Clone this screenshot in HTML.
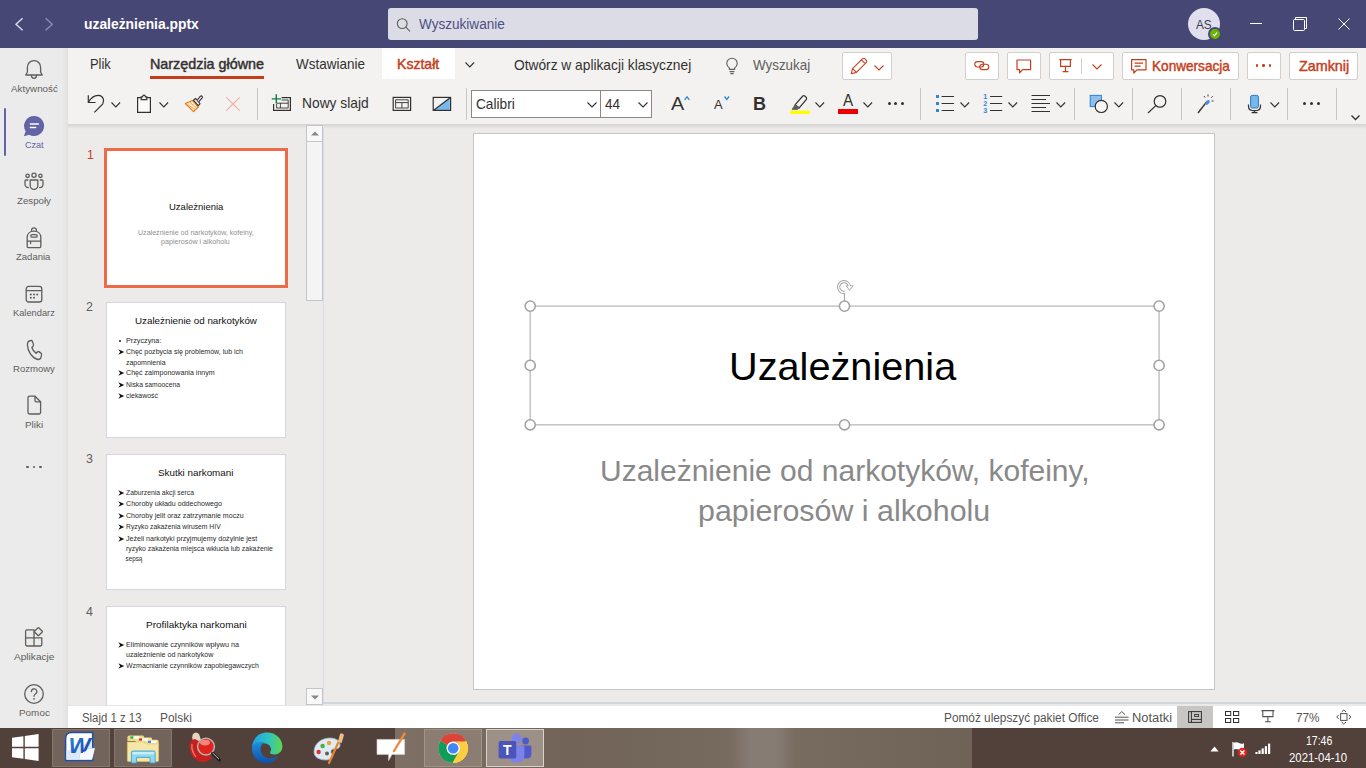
<!DOCTYPE html>
<html lang="pl"><head><meta charset="utf-8"><title>uzależnienia.pptx</title>
<style>
html,body{margin:0;padding:0;}
body{width:1366px;height:768px;overflow:hidden;position:relative;background:#edebe9;font-family:"Liberation Sans",sans-serif;}
#r{position:absolute;left:0;top:0;width:1366px;height:768px;overflow:hidden;}
#r div,#r svg,#r span.t{position:absolute;}
#r span.t{white-space:nowrap;transform-origin:0 50%;display:block;}
svg{overflow:visible;}
</style></head>
<body><div id="r">
<div style="left:68px;top:124px;width:1298px;height:581px;background:#edebe9;"></div>
<div style="left:323px;top:128px;width:1px;height:576px;background:#dcdce4;"></div>
<div style="left:0px;top:0px;width:1366px;height:48px;background:#464775;"></div>
<svg style="left:14px;top:16px;" width="10" height="16" viewBox="0 0 10 16"><path d="M8.6 2.2 L2 8.2 L8.6 14.2" fill="none" stroke="#dcdcec" stroke-width="1.4"/></svg>
<svg style="left:44px;top:16px;" width="10" height="16" viewBox="0 0 10 16"><path d="M1.6 2.2 L8.2 8.2 L1.6 14.2" fill="none" stroke="#8d8eb3" stroke-width="1.4"/></svg>
<span class="t" id="l0" style="left:84.00px;top:17.00px;font-size:14px;line-height:14px;height:14px;color:#ffffff;font-weight:700;transform:scaleX(0.9903);">uzależnienia.pptx</span>
<div style="left:388px;top:8px;width:590px;height:32px;background:#dcdce6;border-radius:3px;"></div>
<svg style="left:396.4px;top:16.6px;" width="16" height="16" viewBox="0 0 16 16"><circle cx="6.2" cy="6.6" r="4.9" fill="none" stroke="#5f5d5c" stroke-width="1.1"/><path d="M9.8 10.2 L14 14.4" stroke="#5f5d5c" stroke-width="1.1" fill="none"/></svg>
<span class="t" id="l1" style="left:418.50px;top:17.20px;font-size:14px;line-height:14px;height:14px;color:#4d4f85;transform:scaleX(0.9687);">Wyszukiwanie</span>
<div style="left:1188px;top:8px;width:32px;height:32px;background:#e1dfee;border-radius:50%;"></div>
<span class="t" id="l2" style="left:1196.00px;top:17.50px;font-size:13px;line-height:13px;height:13px;color:#3b3a50;transform:scaleX(0.9054);">AS</span>
<div style="left:1208px;top:27px;width:14px;height:14px;background:#464775;border-radius:50%;"></div>
<div style="left:1210px;top:29px;width:10px;height:10px;background:#6bb700;border-radius:50%;"></div>
<svg style="left:1212px;top:31px;" width="6" height="6" viewBox="0 0 6 6"><path d="M1 3.2 L2.5 4.6 L5 1.6" fill="none" stroke="#fff" stroke-width="1.1"/></svg>
<div style="left:1250px;top:22.5px;width:12px;height:1px;background:#ffffff;"></div>
<svg style="left:1292px;top:16px;" width="16" height="16" viewBox="0 0 16 16"><path d="M3.5 3.5 V1.5 H14.5 V12.5 H12.5" fill="none" stroke="#fff" stroke-width="1"/><rect x="1.5" y="3.5" width="11" height="11" rx="1" fill="none" stroke="#fff" stroke-width="1"/></svg>
<svg style="left:1338px;top:18px;" width="12" height="12" viewBox="0 0 12 12"><path d="M0.5 0.5 L11.5 11.5 M11.5 0.5 L0.5 11.5" stroke="#fff" stroke-width="1" fill="none"/></svg>
<div style="left:0px;top:48px;width:68px;height:680px;background:#ebebeb;"></div>
<div style="left:62px;top:48px;width:6px;height:680px;background:linear-gradient(90deg,rgba(0,0,0,0),rgba(0,0,0,0.045));"></div>
<div style="left:4px;top:108px;width:2px;height:48px;background:#6264a7;border-radius:1px;"></div>
<span class="t" id="l3" style="left:11.00px;top:83.95px;font-size:9.7px;line-height:9.7px;height:9.7px;color:#5f5e5c;transform:scaleX(1.0117);">Aktywność</span>
<span class="t" id="l4" style="left:17.00px;top:195.95px;font-size:9.7px;line-height:9.7px;height:9.7px;color:#5f5e5c;">Zespoły</span>
<span class="t" id="l5" style="left:16.00px;top:251.95px;font-size:9.7px;line-height:9.7px;height:9.7px;color:#5f5e5c;transform:scaleX(0.9826);">Zadania</span>
<span class="t" id="l6" style="left:13.00px;top:307.95px;font-size:9.7px;line-height:9.7px;height:9.7px;color:#5f5e5c;transform:scaleX(0.9594);">Kalendarz</span>
<span class="t" id="l7" style="left:13.00px;top:363.95px;font-size:9.7px;line-height:9.7px;height:9.7px;color:#5f5e5c;transform:scaleX(0.9840);">Rozmowy</span>
<span class="t" id="l8" style="left:25.00px;top:419.95px;font-size:9.7px;line-height:9.7px;height:9.7px;color:#5f5e5c;transform:scaleX(1.0222);">Pliki</span>
<span class="t" id="l9" style="left:14.00px;top:651.95px;font-size:9.7px;line-height:9.7px;height:9.7px;color:#5f5e5c;transform:scaleX(1.0422);">Aplikacje</span>
<span class="t" id="l10" style="left:19.00px;top:707.95px;font-size:9.7px;line-height:9.7px;height:9.7px;color:#5f5e5c;transform:scaleX(1.0229);">Pomoc</span>
<span class="t" id="l11" style="left:24.80px;top:140.00px;font-size:9.6px;line-height:9.6px;height:9.6px;color:#6264a7;transform:scaleX(0.9421);">Czat</span>
<svg style="left:24px;top:59px;" width="20" height="21" viewBox="0 0 20 21"><path d="M1.8 16 H18.2 L16.6 13 V8.4 C16.6 4.4 13.8 1.6 10 1.6 C6.2 1.6 3.4 4.4 3.4 8.4 V13 Z" fill="none" stroke="#5f5e5c" stroke-width="1.3" stroke-linecap="round" stroke-linejoin="round"/><path d="M7.4 16.4 C7.6 18.6 8.8 19.4 10 19.4 C11.2 19.4 12.4 18.6 12.6 16.4" fill="none" stroke="#5f5e5c" stroke-width="1.3" stroke-linecap="round" stroke-linejoin="round"/></svg>
<svg style="left:23px;top:115px;" width="22" height="22" viewBox="0 0 22 22"><path d="M11.2 1 A10 10 0 1 1 6.2 19.7 L0.9 21.2 L2.6 16.2 A10 10 0 0 1 11.2 1 Z" fill="#6264a7"/><path d="M7.4 9 H15.4 M7.4 12.6 H12.6" stroke="#fff" stroke-width="1.5" stroke-linecap="round" fill="none"/></svg>
<svg style="left:23px;top:171px;" width="22" height="22" viewBox="0 0 22 22"><circle cx="11" cy="4.2" r="2.1" fill="none" stroke="#5f5e5c" stroke-width="1.3" stroke-linecap="round" stroke-linejoin="round"/><circle cx="4.6" cy="4.8" r="1.7" fill="none" stroke="#5f5e5c" stroke-width="1.3" stroke-linecap="round" stroke-linejoin="round"/><circle cx="17.4" cy="4.8" r="1.7" fill="none" stroke="#5f5e5c" stroke-width="1.3" stroke-linecap="round" stroke-linejoin="round"/><path d="M7.2 9 H14.8 V14.6 A3.8 3.8 0 0 1 7.2 14.6 Z" fill="none" stroke="#5f5e5c" stroke-width="1.3" stroke-linecap="round" stroke-linejoin="round"/><path d="M4.8 9 H3 Q2 9 2 10 V13.2 A3.4 3.4 0 0 0 5.4 16.6" fill="none" stroke="#5f5e5c" stroke-width="1.3" stroke-linecap="round" stroke-linejoin="round"/><path d="M17.2 9 H19 Q20 9 20 10 V13.2 A3.4 3.4 0 0 1 16.6 16.6" fill="none" stroke="#5f5e5c" stroke-width="1.3" stroke-linecap="round" stroke-linejoin="round"/></svg>
<svg style="left:24px;top:227px;" width="20" height="22" viewBox="0 0 20 22"><path d="M7.6 4.2 V3.2 A2.4 2.4 0 0 1 12.4 3.2 V4.2" fill="none" stroke="#5f5e5c" stroke-width="1.3" stroke-linecap="round" stroke-linejoin="round"/><path d="M3.2 19.6 V10.4 C3.2 6.6 6 4.2 10 4.2 C14 4.2 16.8 6.6 16.8 10.4 V19.6 Q16.8 20.6 15.8 20.6 H4.2 Q3.2 20.6 3.2 19.6 Z" fill="none" stroke="#5f5e5c" stroke-width="1.3" stroke-linecap="round" stroke-linejoin="round"/><rect x="6.8" y="7.6" width="6.4" height="2.6" rx="1.3" fill="none" stroke="#5f5e5c" stroke-width="1.3" stroke-linecap="round" stroke-linejoin="round"/><path d="M3.4 14.2 H16.6 M6.6 14.4 V16.6" fill="none" stroke="#5f5e5c" stroke-width="1.3" stroke-linecap="round" stroke-linejoin="round"/></svg>
<svg style="left:24px;top:283.5px;" width="20" height="20" viewBox="0 0 20 20"><rect x="2.2" y="2.4" width="15.6" height="15.6" rx="2.6" fill="none" stroke="#5f5e5c" stroke-width="1.3" stroke-linecap="round" stroke-linejoin="round"/><path d="M2.4 6.6 H17.6" fill="none" stroke="#5f5e5c" stroke-width="1.3" stroke-linecap="round" stroke-linejoin="round"/><circle cx="6.8" cy="10.4" r="1" fill="#5f5e5c"/><circle cx="10" cy="10.4" r="1" fill="#5f5e5c"/><circle cx="13.2" cy="10.4" r="1" fill="#5f5e5c"/><circle cx="6.8" cy="13.8" r="1" fill="#5f5e5c"/><circle cx="10" cy="13.8" r="1" fill="#5f5e5c"/></svg>
<svg style="left:24px;top:339px;" width="20" height="24" viewBox="0 0 20 24"><g transform="translate(0.3,-0.6) scale(0.97,1.2)"><path d="M5.2 2.2 L7 1.8 Q8 1.7 8.4 2.6 L9.4 5 Q9.7 5.8 9.1 6.4 L7.8 7.6 Q8.8 10.6 12.2 12.4 L13.6 11.2 Q14.3 10.7 15.1 11.1 L17.2 12.3 Q18 12.8 17.8 13.7 L17.3 15.4 Q16.6 17.8 14 17.6 C8.4 16.6 3.4 11 3.2 5.4 Q3.2 2.8 5.2 2.2 Z" fill="none" stroke="#5f5e5c" stroke-width="1.3" stroke-linecap="round" stroke-linejoin="round"/></g></svg>
<svg style="left:24px;top:394px;" width="20" height="22" viewBox="0 0 20 22"><path d="M4 3.6 Q4 2.2 5.4 2.2 H11 L16.6 7.8 V18.6 Q16.6 20 15.2 20 H5.4 Q4 20 4 18.6 Z" fill="none" stroke="#5f5e5c" stroke-width="1.3" stroke-linecap="round" stroke-linejoin="round"/><path d="M11 2.4 V6.4 Q11 7.8 12.4 7.8 H16.4" fill="none" stroke="#5f5e5c" stroke-width="1.3" stroke-linecap="round" stroke-linejoin="round"/></svg>
<div style="left:26.3px;top:466px;width:2.4px;height:2.4px;background:#5f5e5c;border-radius:50%;"></div>
<div style="left:32.8px;top:466px;width:2.4px;height:2.4px;background:#5f5e5c;border-radius:50%;"></div>
<div style="left:39.3px;top:466px;width:2.4px;height:2.4px;background:#5f5e5c;border-radius:50%;"></div>
<svg style="left:24px;top:627px;" width="20" height="20" viewBox="0 0 20 20"><path d="M10 2.8 H3 Q1.6 2.8 1.6 4.2 V17.6 Q1.6 19 3 19 H16.4 Q17.8 19 17.8 17.6 V10.8 H1.6 M10 2.8 V19" fill="none" stroke="#5f5e5c" stroke-width="1.3" stroke-linecap="round" stroke-linejoin="round"/><rect x="11.4" y="1.6" width="6" height="6" rx="0.8" transform="rotate(45 14.4 4.6)" fill="none" stroke="#5f5e5c" stroke-width="1.3" stroke-linecap="round" stroke-linejoin="round"/></svg>
<svg style="left:23px;top:683px;" width="22" height="22" viewBox="0 0 22 22"><circle cx="11" cy="11" r="9.3" fill="none" stroke="#5f5e5c" stroke-width="1.3" stroke-linecap="round" stroke-linejoin="round"/><path d="M8.4 8.6 A2.7 2.7 0 1 1 12.4 11 Q11 11.8 11 13.2" fill="none" stroke="#5f5e5c" stroke-width="1.3" stroke-linecap="round" stroke-linejoin="round"/><circle cx="11" cy="15.8" r="0.9" fill="#5f5e5c"/></svg>
<div style="left:68px;top:124px;width:1298px;height:5px;background:linear-gradient(180deg,rgba(0,0,0,0.10),rgba(0,0,0,0));"></div>
<div style="left:68px;top:48px;width:1298px;height:76px;background:#f3f2f1;"></div>
<span class="t" id="l12" style="left:89.80px;top:57.35px;font-size:14.3px;line-height:14.3px;height:14.3px;color:#323130;transform:scaleX(0.9044);">Plik</span>
<span class="t" id="l13" style="left:150.01px;top:57.25px;font-size:14.5px;line-height:14.5px;height:14.5px;color:#323130;transform:scaleX(0.9896);-webkit-text-stroke:0.45px currentColor;">Narzędzia główne</span>
<div style="left:150px;top:75.5px;width:114px;height:3px;background:#c43e1c;"></div>
<span class="t" id="l14" style="left:296.00px;top:57.35px;font-size:14.3px;line-height:14.3px;height:14.3px;color:#323130;transform:scaleX(0.9433);">Wstawianie</span>
<div style="left:382px;top:48px;width:73px;height:31px;background:#ffffff;"></div>
<span class="t" id="l15" style="left:397.03px;top:57.25px;font-size:14.5px;line-height:14.5px;height:14.5px;color:#c43e1c;transform:scaleX(0.9697);-webkit-text-stroke:0.45px currentColor;">Kształt</span>
<svg style="left:464.7px;top:61.8px;" width="9.6" height="5.4" viewBox="0 0 9.6 5.4"><path d="M0.5 0.5 L4.8 4.9 L9.1 0.5" fill="none" stroke="#323130" stroke-width="1.1"/></svg>
<span class="t" id="l16" style="left:514.00px;top:58.35px;font-size:14.5px;line-height:14.5px;height:14.5px;color:#323130;transform:scaleX(0.9479);">Otwórz w aplikacji klasycznej</span>
<svg style="left:724px;top:56px;" width="16" height="20" viewBox="0 0 16 20"><path d="M5.4 13.4 V12 C3.6 10.8 2.8 9.2 2.8 7.4 A5.2 5.2 0 0 1 13.2 7.4 C13.2 9.2 12.4 10.8 10.6 12 V13.4 Z" fill="none" stroke="#605e5c" stroke-width="1.1"/><path d="M5.6 15.6 H10.4 M6.4 17.6 H9.6" stroke="#605e5c" stroke-width="1.1" fill="none"/></svg>
<span class="t" id="l17" style="left:753.00px;top:58.35px;font-size:14.5px;line-height:14.5px;height:14.5px;color:#605e5c;transform:scaleX(0.9240);">Wyszukaj</span>
<div style="left:842px;top:52px;width:49.5px;height:28px;background:#ffffff;box-sizing:border-box;border:1px solid #d2d0ce;border-radius:2px;"></div>
<svg style="left:849px;top:56px;" width="20" height="20" viewBox="0 0 20 20"><path d="M2.2 17.8 L3.6 12.6 L13.6 2.6 Q14.6 1.8 15.6 2.6 L17.4 4.4 Q18.2 5.4 17.4 6.4 L7.4 16.4 Z M3.8 12.8 L7.2 16.2 M12.4 3.8 L16.2 7.6" fill="none" stroke="#c43e1c" stroke-width="1.1" stroke-linejoin="round"/></svg>
<svg style="left:873.5px;top:64.75px;" width="10" height="5.5" viewBox="0 0 10 5.5"><path d="M0.5 0.5 L5.0 5.0 L9.5 0.5" fill="none" stroke="#c43e1c" stroke-width="1.1"/></svg>
<div style="left:965px;top:52px;width:33.5px;height:28px;background:#ffffff;box-sizing:border-box;border:1px solid #d2d0ce;border-radius:2px;"></div>
<svg style="left:973px;top:58px;" width="18" height="16" viewBox="0 0 18 16"><rect x="1.8" y="3.6" width="9" height="5.4" rx="2.7" fill="none" stroke="#c43e1c" stroke-width="1.1"/><rect x="6.8" y="6.2" width="9" height="5.4" rx="2.7" fill="none" stroke="#c43e1c" stroke-width="1.1"/></svg>
<div style="left:1007px;top:52px;width:33.5px;height:28px;background:#ffffff;box-sizing:border-box;border:1px solid #d2d0ce;border-radius:2px;"></div>
<svg style="left:1015px;top:58px;" width="18" height="18" viewBox="0 0 18 18"><path d="M2 2 H15.6 V11.6 H7.6 L4.6 14.8 V11.6 H2 Z" fill="none" stroke="#c43e1c" stroke-width="1.2" stroke-linejoin="round"/></svg>
<div style="left:1049px;top:52px;width:64.5px;height:28px;background:#ffffff;box-sizing:border-box;border:1px solid #d2d0ce;border-radius:2px;"></div>
<svg style="left:1057px;top:57px;" width="18" height="18" viewBox="0 0 18 18"><path d="M2.4 2.6 H14.6 M3.6 2.8 V9.4 H13.4 V2.8 M8.5 9.6 V14.4 M5.6 14.6 H11.4" fill="none" stroke="#c43e1c" stroke-width="1.2"/></svg>
<div style="left:1081px;top:58px;width:1px;height:16px;background:#d2d0ce;"></div>
<svg style="left:1092.0px;top:63.75px;" width="10" height="5.5" viewBox="0 0 10 5.5"><path d="M0.5 0.5 L5.0 5.0 L9.5 0.5" fill="none" stroke="#c43e1c" stroke-width="1.1"/></svg>
<div style="left:1122px;top:52px;width:116.5px;height:28px;background:#ffffff;box-sizing:border-box;border:1px solid #d2d0ce;border-radius:2px;"></div>
<svg style="left:1130px;top:58px;" width="18" height="18" viewBox="0 0 18 18"><path d="M1.6 1.6 H16 V11.8 H7 L3.8 15 V11.8 H1.6 Z M4.6 5.2 H13 M4.6 8.2 H10.6" fill="none" stroke="#c43e1c" stroke-width="1.2" stroke-linejoin="round"/></svg>
<span class="t" id="l18" style="left:1151.56px;top:58.75px;font-size:14.5px;line-height:14.5px;height:14.5px;color:#c43e1c;transform:scaleX(0.9379);-webkit-text-stroke:0.45px currentColor;">Konwersacja</span>
<div style="left:1247px;top:52px;width:33.5px;height:28px;background:#ffffff;box-sizing:border-box;border:1px solid #d2d0ce;border-radius:2px;"></div>
<div style="left:1255.7px;top:64.3px;width:2.6px;height:2.6px;background:#c43e1c;border-radius:50%;"></div>
<div style="left:1262.2px;top:64.3px;width:2.6px;height:2.6px;background:#c43e1c;border-radius:50%;"></div>
<div style="left:1268.7px;top:64.3px;width:2.6px;height:2.6px;background:#c43e1c;border-radius:50%;"></div>
<div style="left:1289px;top:52px;width:68.5px;height:28px;background:#ffffff;box-sizing:border-box;border:1px solid #d2d0ce;border-radius:2px;"></div>
<span class="t" id="l19" style="left:1298.80px;top:58.75px;font-size:14.5px;line-height:14.5px;height:14.5px;color:#c43e1c;transform:scaleX(0.9894);-webkit-text-stroke:0.45px currentColor;">Zamknij</span>
<svg style="left:86px;top:93px;" width="20" height="20" viewBox="0 0 20 20"><path d="M2.3 2.2 V9.5 H9.6" fill="none" stroke="#323130" stroke-width="1.2"/><path d="M2.5 9.3 C5 4.6 9 2.3 12.6 2.4 C17 2.8 19 7.6 16.6 11.2 L8.4 19.4" fill="none" stroke="#323130" stroke-width="1.2"/></svg>
<svg style="left:110.7px;top:101.8px;" width="9.6" height="5.4" viewBox="0 0 9.6 5.4"><path d="M0.5 0.5 L4.8 4.9 L9.1 0.5" fill="none" stroke="#323130" stroke-width="1.1"/></svg>
<svg style="left:135px;top:94px;" width="18" height="20" viewBox="0 0 18 20"><path d="M6.2 3.6 H2.6 V18.4 H15.4 V3.6 H11.8" fill="#fafafa" stroke="#323130" stroke-width="1.2"/><path d="M6.2 5.6 V2.8 H7.6 Q7.8 1.2 9 1.2 Q10.2 1.2 10.4 2.8 H11.8 V5.6 Z" fill="none" stroke="#323130" stroke-width="1.2"/></svg>
<svg style="left:158.7px;top:102.3px;" width="9.6" height="5.4" viewBox="0 0 9.6 5.4"><path d="M0.5 0.5 L4.8 4.9 L9.1 0.5" fill="none" stroke="#323130" stroke-width="1.1"/></svg>
<svg style="left:184px;top:94px;" width="20" height="20" viewBox="0 0 20 20"><path d="M1.4 9.6 L8.6 6.6 L14.2 13 L9.6 17.6 Z" fill="#fde9c8" stroke="#e07a10" stroke-width="1.1" stroke-linejoin="round"/><path d="M3 10.4 L11.4 15.6 M6 8.4 L12.8 14.2" stroke="#f0a040" stroke-width="0.9" fill="none"/><path d="M9.4 6.2 L11.6 4.4 L16 9.6 L14.4 11.8 Z" fill="#f3f2f1" stroke="#323130" stroke-width="1.1" stroke-linejoin="round"/><path d="M13.4 6 L16.4 2.2 Q17.4 1.4 18.2 2.4 Q18.8 3.2 18 4.2 L14.8 7.6" fill="#f3f2f1" stroke="#323130" stroke-width="1.1"/></svg>
<svg style="left:226px;top:97px;" width="14" height="14" viewBox="0 0 14 14"><path d="M0.3 0.3 L13.7 13.7 M13.7 0.3 L0.3 13.7" stroke="#f1a9a5" stroke-width="1.1" fill="none"/></svg>
<div style="left:257px;top:88px;width:1px;height:32px;background:#c8c6c4;"></div>
<svg style="left:271px;top:92px;" width="22" height="20" viewBox="0 0 22 20"><path d="M10.6 5.6 H19.4 V18.4 H2.6 V12" fill="none" stroke="#323130" stroke-width="1.2"/><path d="M10.6 8 H17.2 V16 H5.6 V12 M5.6 11.2 H17.2 M9.4 11.2 V16" fill="none" stroke="#323130" stroke-width="0.9"/><path d="M5.3 2.2 V11.4 M0.8 6.9 H10" stroke="#107c41" stroke-width="1.4" fill="none"/></svg>
<span class="t" id="l20" style="left:302.03px;top:96.25px;font-size:14.3px;line-height:14.3px;height:14.3px;color:#323130;transform:scaleX(0.9652);">Nowy slajd</span>
<svg style="left:392px;top:96px;" width="20" height="16" viewBox="0 0 20 16"><rect x="1.2" y="1.4" width="17.4" height="13" fill="none" stroke="#323130" stroke-width="1.2"/><path d="M3.6 3.8 H16.2 V12 H3.6 Z M3.6 6.6 H16.2 M9.9 6.6 V12" fill="none" stroke="#323130" stroke-width="0.9"/></svg>
<svg style="left:432px;top:96px;" width="20" height="16" viewBox="0 0 20 16"><path d="M2 14 L17.8 2 V14 Z" fill="#78b7ea"/><rect x="1.2" y="1.4" width="17.4" height="13" fill="none" stroke="#323130" stroke-width="1.2"/><path d="M2 14 L17.8 2" fill="none" stroke="#323130" stroke-width="1.2"/></svg>
<div style="left:466px;top:88px;width:1px;height:32px;background:#c8c6c4;"></div>
<div style="left:471px;top:90px;width:130px;height:28px;background:#ffffff;box-sizing:border-box;border:1px solid #8a8886;"></div>
<div style="left:600px;top:90px;width:51.5px;height:28px;background:#ffffff;box-sizing:border-box;border:1px solid #8a8886;"></div>
<span class="t" id="l21" style="left:476.00px;top:96.75px;font-size:14.5px;line-height:14.5px;height:14.5px;color:#323130;transform:scaleX(0.9420);">Calibri</span>
<svg style="left:587.0px;top:101.75px;" width="10" height="5.5" viewBox="0 0 10 5.5"><path d="M0.5 0.5 L5.0 5.0 L9.5 0.5" fill="none" stroke="#323130" stroke-width="1.1"/></svg>
<span class="t" id="l22" style="left:604.50px;top:96.75px;font-size:14.5px;line-height:14.5px;height:14.5px;color:#323130;transform:scaleX(0.9338);">44</span>
<svg style="left:638.0px;top:101.75px;" width="10" height="5.5" viewBox="0 0 10 5.5"><path d="M0.5 0.5 L5.0 5.0 L9.5 0.5" fill="none" stroke="#323130" stroke-width="1.1"/></svg>
<span class="t" id="l23" style="left:670.50px;top:94.00px;font-size:19px;line-height:19px;height:19px;color:#323130;transform:scaleX(1.0385);">A</span>
<svg style="left:683.8px;top:96px;" width="6" height="4.4" viewBox="0 0 6 4.4"><path d="M0.6 3.8 L3 0.8 L5.4 3.8" fill="none" stroke="#2b88d8" stroke-width="1.3"/></svg>
<span class="t" id="l24" style="left:714.00px;top:98.00px;font-size:13.6px;line-height:13.6px;height:13.6px;color:#323130;transform:scaleX(0.9500);">A</span>
<svg style="left:724.0px;top:96.4px;" width="5.6" height="4" viewBox="0 0 5.6 4"><path d="M0.5 0.5 L2.8 3.5 L5.1 0.5" fill="none" stroke="#2b88d8" stroke-width="1.3"/></svg>
<span class="t" id="l25" style="left:753.00px;top:94.50px;font-size:18px;line-height:18px;height:18px;color:#323130;font-weight:700;">B</span>
<svg style="left:789px;top:93px;" width="22" height="22" viewBox="0 0 22 22"><path d="M6.2 11.6 L13.8 3 Q14.8 2.2 15.8 3 L17.4 4.6 Q18 5.6 17.2 6.6 L10.2 15 Z" fill="none" stroke="#323130" stroke-width="1.2"/><path d="M6.2 11.6 L10.2 15 L8.6 16.4 H3 Z" fill="#605e5c" stroke="#605e5c" stroke-width="0.8"/><rect x="1" y="17.7" width="20" height="3.3" fill="#ffff00"/></svg>
<svg style="left:814.7px;top:101.8px;" width="9.6" height="5.4" viewBox="0 0 9.6 5.4"><path d="M0.5 0.5 L4.8 4.9 L9.1 0.5" fill="none" stroke="#323130" stroke-width="1.1"/></svg>
<span class="t" id="l26" style="left:842.50px;top:93.00px;font-size:16.6px;line-height:16.6px;height:16.6px;color:#323130;transform:scaleX(0.9167);">A</span>
<div style="left:838px;top:109px;width:20px;height:5px;background:#f00000;"></div>
<svg style="left:862.7px;top:101.8px;" width="9.6" height="5.4" viewBox="0 0 9.6 5.4"><path d="M0.5 0.5 L4.8 4.9 L9.1 0.5" fill="none" stroke="#323130" stroke-width="1.1"/></svg>
<div style="left:887.5px;top:102.2px;width:3px;height:3px;background:#323130;border-radius:50%;"></div>
<div style="left:894.0px;top:102.2px;width:3px;height:3px;background:#323130;border-radius:50%;"></div>
<div style="left:900.5px;top:102.2px;width:3px;height:3px;background:#323130;border-radius:50%;"></div>
<div style="left:920px;top:88px;width:1px;height:32px;background:#c8c6c4;"></div>
<svg style="left:935px;top:93px;" width="20" height="21" viewBox="0 0 20 21"><rect x="1" y="2.0" width="3" height="3" fill="#2b88d8"/><path d="M6.6 3.5 H19" stroke="#323130" stroke-width="1"/><rect x="1" y="9.0" width="3" height="3" fill="#2b88d8"/><path d="M6.6 10.5 H19" stroke="#323130" stroke-width="1"/><rect x="1" y="16.0" width="3" height="3" fill="#2b88d8"/><path d="M6.6 17.5 H19" stroke="#323130" stroke-width="1"/></svg>
<svg style="left:959.7px;top:101.8px;" width="9.6" height="5.4" viewBox="0 0 9.6 5.4"><path d="M0.5 0.5 L4.8 4.9 L9.1 0.5" fill="none" stroke="#323130" stroke-width="1.1"/></svg>
<svg style="left:983px;top:93px;" width="20" height="21" viewBox="0 0 20 21"><text x="0.2" y="6.1" font-size="7.2" font-weight="700" font-family="Liberation Sans, sans-serif" fill="#2b88d8">1</text><path d="M7 3.5 H19.2" stroke="#323130" stroke-width="1"/><text x="0.2" y="13.1" font-size="7.2" font-weight="700" font-family="Liberation Sans, sans-serif" fill="#2b88d8">2</text><path d="M7 10.5 H19.2" stroke="#323130" stroke-width="1"/><text x="0.2" y="20.1" font-size="7.2" font-weight="700" font-family="Liberation Sans, sans-serif" fill="#2b88d8">3</text><path d="M7 17.5 H19.2" stroke="#323130" stroke-width="1"/></svg>
<svg style="left:1007.7px;top:101.8px;" width="9.6" height="5.4" viewBox="0 0 9.6 5.4"><path d="M0.5 0.5 L4.8 4.9 L9.1 0.5" fill="none" stroke="#323130" stroke-width="1.1"/></svg>
<svg style="left:1031px;top:93px;" width="20" height="21" viewBox="0 0 20 21"><path d="M0.5 2.5 H19" stroke="#323130" stroke-width="1"/><path d="M0.5 6.5 H15" stroke="#323130" stroke-width="1"/><path d="M0.5 10.5 H19" stroke="#323130" stroke-width="1"/><path d="M0.5 14.5 H15" stroke="#323130" stroke-width="1"/><path d="M0.5 18.5 H19" stroke="#323130" stroke-width="1"/></svg>
<svg style="left:1055.7px;top:101.8px;" width="9.6" height="5.4" viewBox="0 0 9.6 5.4"><path d="M0.5 0.5 L4.8 4.9 L9.1 0.5" fill="none" stroke="#323130" stroke-width="1.1"/></svg>
<div style="left:1074px;top:88px;width:1px;height:32px;background:#c8c6c4;"></div>
<svg style="left:1088px;top:94px;" width="22" height="22" viewBox="0 0 22 22"><rect x="2.2" y="1.4" width="11.2" height="11.2" fill="#8fc0ec" stroke="#2b82d6" stroke-width="1"/><circle cx="13.3" cy="12.4" r="6.1" fill="#f7f6f5" stroke="#323130" stroke-width="1.2"/></svg>
<svg style="left:1113.7px;top:101.8px;" width="9.6" height="5.4" viewBox="0 0 9.6 5.4"><path d="M0.5 0.5 L4.8 4.9 L9.1 0.5" fill="none" stroke="#323130" stroke-width="1.1"/></svg>
<div style="left:1132px;top:88px;width:1px;height:32px;background:#c8c6c4;"></div>
<svg style="left:1146px;top:94px;" width="22" height="20" viewBox="0 0 22 20"><circle cx="14" cy="7.4" r="5.8" fill="none" stroke="#323130" stroke-width="1.2"/><path d="M9.8 11.6 L2 19" fill="none" stroke="#323130" stroke-width="1.2"/></svg>
<div style="left:1181px;top:88px;width:1px;height:32px;background:#c8c6c4;"></div>
<svg style="left:1195px;top:93px;" width="20" height="22" viewBox="0 0 20 22"><path d="M3 20 L12 8.4" stroke="#323130" stroke-width="1.4" fill="none"/><path d="M10.2 10.6 C11 7.6 13 6.4 14.4 7.4 C15.4 8.6 14.4 10.6 11.6 12.2 Z" fill="#4a90d9"/><path d="M13 1.4 V3.6 M17.8 3.2 L16.2 4.8 M18.6 8 H16.6 M9 3 L10.2 4.6" stroke="#323130" stroke-width="0.9" fill="none"/></svg>
<div style="left:1230px;top:88px;width:1px;height:32px;background:#c8c6c4;"></div>
<svg style="left:1245px;top:93px;" width="18" height="22" viewBox="0 0 18 22"><rect x="5.6" y="2.4" width="7.8" height="12.6" rx="1.6" fill="#78b7ea" stroke="#2b79c2" stroke-width="1"/><path d="M3.5 11.4 V13.4 Q3.5 17.7 9.5 17.7 Q15.5 17.7 15.5 13.4 V11.4 M9.5 17.8 V19.6 M6.6 19.7 H12.4" fill="none" stroke="#323130" stroke-width="1.2"/></svg>
<svg style="left:1269.7px;top:101.89999999999999px;" width="9.6" height="5.4" viewBox="0 0 9.6 5.4"><path d="M0.5 0.5 L4.8 4.9 L9.1 0.5" fill="none" stroke="#323130" stroke-width="1.1"/></svg>
<div style="left:1287px;top:88px;width:1px;height:32px;background:#c8c6c4;"></div>
<div style="left:1302.5px;top:102.2px;width:3px;height:3px;background:#323130;border-radius:50%;"></div>
<div style="left:1309.5px;top:102.2px;width:3px;height:3px;background:#323130;border-radius:50%;"></div>
<div style="left:1316.5px;top:102.2px;width:3px;height:3px;background:#323130;border-radius:50%;"></div>
<div style="left:1336px;top:88px;width:1px;height:32px;background:#c8c6c4;"></div>
<svg style="left:1351.0px;top:115.0px;" width="9" height="5" viewBox="0 0 9 5"><path d="M0.5 0.5 L4.5 4.5 L8.5 0.5" fill="none" stroke="#323130" stroke-width="1.3"/></svg>
<div style="left:104px;top:148px;width:184px;height:140px;background:#ffffff;box-sizing:border-box;border:3px solid #ed6c47;"></div>
<span class="t" id="l27" style="left:87.00px;top:149.00px;font-size:12.4px;line-height:12.4px;height:12.4px;color:#c8451f;">1</span>
<div style="left:106px;top:302px;width:180px;height:135.5px;background:#ffffff;box-sizing:border-box;border:1px solid #d6d6e0;"></div>
<span class="t" id="l28" style="left:86.00px;top:301.00px;font-size:12.4px;line-height:12.4px;height:12.4px;color:#605e5c;">2</span>
<div style="left:106px;top:454px;width:180px;height:135.5px;background:#ffffff;box-sizing:border-box;border:1px solid #d6d6e0;"></div>
<span class="t" id="l29" style="left:86.00px;top:453.10px;font-size:12.4px;line-height:12.4px;height:12.4px;color:#605e5c;">3</span>
<div style="left:106px;top:606px;width:180px;height:110px;background:#ffffff;box-sizing:border-box;border:1px solid #d6d6e0;"></div>
<span class="t" id="l30" style="left:86.00px;top:605.80px;font-size:12.4px;line-height:12.4px;height:12.4px;color:#605e5c;">4</span>
<span class="t" id="l31" style="left:168.50px;top:202.20px;font-size:9.6px;line-height:9.6px;height:9.6px;color:#111111;transform:scaleX(0.9893);">Uzależnienia</span>
<span class="t" id="l32" style="left:138.00px;top:229.65px;font-size:6.3px;line-height:6.3px;height:6.3px;color:#8f8f8f;transform:scaleX(1.1258);">Uzależnienie od narkotyków, kofeiny,</span>
<span class="t" id="l33" style="left:161.20px;top:239.15px;font-size:6.3px;line-height:6.3px;height:6.3px;color:#8f8f8f;transform:scaleX(1.1350);">papierosów i alkoholu</span>
<span class="t" id="l34" style="left:135.00px;top:315.90px;font-size:9.6px;line-height:9.6px;height:9.6px;color:#111111;transform:scaleX(1.0207);">Uzależnienie od narkotyków</span>
<span class="t" id="l35" style="left:158.30px;top:468.20px;font-size:9.6px;line-height:9.6px;height:9.6px;color:#111111;transform:scaleX(1.0252);">Skutki narkomani</span>
<span class="t" id="l36" style="left:145.80px;top:620.00px;font-size:9.6px;line-height:9.6px;height:9.6px;color:#111111;transform:scaleX(1.0381);">Profilaktyka narkomani</span>
<div style="left:118.8px;top:340.4px;width:2px;height:2px;background:#222;border-radius:50%;"></div>
<span class="t" id="l37" style="left:125.50px;top:338.35px;font-size:6.3px;line-height:6.3px;height:6.3px;color:#2a2a2a;transform:scaleX(1.1500);">Przyczyna:</span>
<span class="t" id="l38" style="left:125.50px;top:349.05px;font-size:6.3px;line-height:6.3px;height:6.3px;color:#2a2a2a;transform:scaleX(1.1137);">Chęć pozbycia się problemów, lub ich</span>
<svg style="left:118.4px;top:348.7px;" width="6.6" height="6" viewBox="0 0 6.6 6"><path d="M0.3 0.3 L6.3 3 L0.3 5.7 L2.2 3 Z" fill="#111"/></svg>
<span class="t" id="l39" style="left:125.50px;top:359.75px;font-size:6.3px;line-height:6.3px;height:6.3px;color:#2a2a2a;transform:scaleX(1.1076);">zapomnienia</span>
<span class="t" id="l40" style="left:125.50px;top:370.15px;font-size:6.3px;line-height:6.3px;height:6.3px;color:#2a2a2a;transform:scaleX(1.1273);">Chęć zaimponowania innym</span>
<svg style="left:118.4px;top:369.8px;" width="6.6" height="6" viewBox="0 0 6.6 6"><path d="M0.3 0.3 L6.3 3 L0.3 5.7 L2.2 3 Z" fill="#111"/></svg>
<span class="t" id="l41" style="left:125.50px;top:381.95px;font-size:6.3px;line-height:6.3px;height:6.3px;color:#2a2a2a;transform:scaleX(1.0782);">Niska samoocena</span>
<svg style="left:118.4px;top:381.59999999999997px;" width="6.6" height="6" viewBox="0 0 6.6 6"><path d="M0.3 0.3 L6.3 3 L0.3 5.7 L2.2 3 Z" fill="#111"/></svg>
<span class="t" id="l42" style="left:125.50px;top:392.85px;font-size:6.3px;line-height:6.3px;height:6.3px;color:#2a2a2a;transform:scaleX(1.1039);">ciekawość</span>
<svg style="left:118.4px;top:392.5px;" width="6.6" height="6" viewBox="0 0 6.6 6"><path d="M0.3 0.3 L6.3 3 L0.3 5.7 L2.2 3 Z" fill="#111"/></svg>
<span class="t" id="l43" style="left:125.50px;top:489.85px;font-size:6.3px;line-height:6.3px;height:6.3px;color:#2a2a2a;transform:scaleX(1.0788);">Zaburzenia akcji serca</span>
<svg style="left:118.4px;top:489.5px;" width="6.6" height="6" viewBox="0 0 6.6 6"><path d="M0.3 0.3 L6.3 3 L0.3 5.7 L2.2 3 Z" fill="#111"/></svg>
<span class="t" id="l44" style="left:125.50px;top:501.15px;font-size:6.3px;line-height:6.3px;height:6.3px;color:#2a2a2a;transform:scaleX(1.1278);">Choroby układu oddechowego</span>
<svg style="left:118.4px;top:500.8px;" width="6.6" height="6" viewBox="0 0 6.6 6"><path d="M0.3 0.3 L6.3 3 L0.3 5.7 L2.2 3 Z" fill="#111"/></svg>
<span class="t" id="l45" style="left:125.50px;top:513.05px;font-size:6.3px;line-height:6.3px;height:6.3px;color:#2a2a2a;transform:scaleX(1.1205);">Choroby jelit oraz zatrzymanie moczu</span>
<svg style="left:118.4px;top:512.7px;" width="6.6" height="6" viewBox="0 0 6.6 6"><path d="M0.3 0.3 L6.3 3 L0.3 5.7 L2.2 3 Z" fill="#111"/></svg>
<span class="t" id="l46" style="left:125.50px;top:524.05px;font-size:6.3px;line-height:6.3px;height:6.3px;color:#2a2a2a;transform:scaleX(1.0732);">Ryzyko zakażenia wirusem HIV</span>
<svg style="left:118.4px;top:523.7px;" width="6.6" height="6" viewBox="0 0 6.6 6"><path d="M0.3 0.3 L6.3 3 L0.3 5.7 L2.2 3 Z" fill="#111"/></svg>
<span class="t" id="l47" style="left:125.50px;top:536.05px;font-size:6.3px;line-height:6.3px;height:6.3px;color:#2a2a2a;transform:scaleX(1.1260);">Jeżeli narkotyki przyjmujemy dożylnie jest</span>
<svg style="left:118.4px;top:535.7px;" width="6.6" height="6" viewBox="0 0 6.6 6"><path d="M0.3 0.3 L6.3 3 L0.3 5.7 L2.2 3 Z" fill="#111"/></svg>
<span class="t" id="l48" style="left:125.50px;top:546.15px;font-size:6.3px;line-height:6.3px;height:6.3px;color:#2a2a2a;transform:scaleX(1.0963);">ryzyko zakażenia miejsca wkłucia lub zakażenie</span>
<span class="t" id="l49" style="left:125.50px;top:556.25px;font-size:6.3px;line-height:6.3px;height:6.3px;color:#2a2a2a;">sepsą</span>
<span class="t" id="l50" style="left:125.50px;top:641.95px;font-size:6.3px;line-height:6.3px;height:6.3px;color:#2a2a2a;transform:scaleX(1.1402);">Eliminowanie czynników wpływu na</span>
<svg style="left:118.4px;top:641.6px;" width="6.6" height="6" viewBox="0 0 6.6 6"><path d="M0.3 0.3 L6.3 3 L0.3 5.7 L2.2 3 Z" fill="#111"/></svg>
<span class="t" id="l51" style="left:125.50px;top:652.15px;font-size:6.3px;line-height:6.3px;height:6.3px;color:#2a2a2a;transform:scaleX(1.1284);">uzależnienie od narkotyków</span>
<span class="t" id="l52" style="left:125.50px;top:662.85px;font-size:6.3px;line-height:6.3px;height:6.3px;color:#2a2a2a;transform:scaleX(1.1075);">Wzmacnianie czynników zapobiegawczych</span>
<svg style="left:118.4px;top:662.5px;" width="6.6" height="6" viewBox="0 0 6.6 6"><path d="M0.3 0.3 L6.3 3 L0.3 5.7 L2.2 3 Z" fill="#111"/></svg>
<div style="left:306px;top:125px;width:17px;height:17px;background:#f8f8f8;box-sizing:border-box;border:1px solid #c3c5cd;"></div>
<svg style="left:310.5px;top:131px;" width="8" height="5" viewBox="0 0 8 5"><path d="M0 4.6 L4 0.4 L8 4.6 Z" fill="#8a8886"/></svg>
<div style="left:306px;top:141px;width:17px;height:160px;background:#f4f4f4;box-sizing:border-box;border:1px solid #c3c5cd;"></div>
<div style="left:306px;top:688px;width:17px;height:17px;background:#f8f8f8;box-sizing:border-box;border:1px solid #c3c5cd;"></div>
<svg style="left:310.5px;top:694.5px;" width="8" height="5" viewBox="0 0 8 5"><path d="M0 0.4 L4 4.6 L8 0.4 Z" fill="#8a8886"/></svg>
<div style="left:473px;top:132.5px;width:742px;height:557px;background:#ffffff;box-sizing:border-box;border:1px solid #c8c6c4;"></div>
<span class="t" id="l53" style="left:728.95px;top:346.70px;font-size:39px;line-height:39px;height:39px;color:#000000;transform:scaleX(1.0176);">Uzależnienia</span>
<span class="t" id="l54" style="left:599.91px;top:457.35px;font-size:28.7px;line-height:28.7px;height:28.7px;color:#898989;transform:scaleX(1.0456);">Uzależnienie od narkotyków, kofeiny,</span>
<span class="t" id="l55" style="left:698.34px;top:496.65px;font-size:28.7px;line-height:28.7px;height:28.7px;color:#898989;transform:scaleX(1.0590);">papierosów i alkoholu</span>
<svg style="left:520px;top:275px;" width="650" height="160" viewBox="0 0 650 160"><rect x="10.200000000000045" y="31.100000000000023" width="628.8999999999999" height="118.69999999999999" fill="none" stroke="#c4c4c4" stroke-width="1.5"/><path d="M324.5 31.100000000000023 V18" stroke="#a6a6a6" stroke-width="1.1"/><circle cx="10.2" cy="31.1" r="5.1" fill="#ffffff" stroke="#a3a3a3" stroke-width="1.6"/><circle cx="10.2" cy="90.4" r="5.1" fill="#ffffff" stroke="#a3a3a3" stroke-width="1.6"/><circle cx="10.2" cy="149.8" r="5.1" fill="#ffffff" stroke="#a3a3a3" stroke-width="1.6"/><circle cx="324.5" cy="31.1" r="5.1" fill="#ffffff" stroke="#a3a3a3" stroke-width="1.6"/><circle cx="324.5" cy="149.8" r="5.1" fill="#ffffff" stroke="#a3a3a3" stroke-width="1.6"/><circle cx="639.1" cy="31.1" r="5.1" fill="#ffffff" stroke="#a3a3a3" stroke-width="1.6"/><circle cx="639.1" cy="90.4" r="5.1" fill="#ffffff" stroke="#a3a3a3" stroke-width="1.6"/><circle cx="639.1" cy="149.8" r="5.1" fill="#ffffff" stroke="#a3a3a3" stroke-width="1.6"/></svg>
<svg style="left:836px;top:279px;" width="18" height="16" viewBox="0 0 18 16"><path d="M13.4 8 A5.4 5.4 0 1 0 9 13.3" fill="none" stroke="#a0a0a0" stroke-width="3.2"/><path d="M10.2 6.8 H17 L13.6 11.4 Z" fill="#ffffff" stroke="#a0a0a0" stroke-width="0.9" stroke-linejoin="round"/><path d="M13.4 8 A5.4 5.4 0 1 0 9 13.3" fill="none" stroke="#ffffff" stroke-width="1.3"/></svg>
<div style="left:323px;top:702px;width:1043px;height:2px;background:#d1d6db;"></div>
<div style="left:323px;top:704px;width:1043px;height:2px;background:#e9e9e9;"></div>
<div style="left:68px;top:705px;width:255px;height:1px;background:#e6e6e6;"></div>
<div style="left:68px;top:706px;width:1298px;height:22px;background:#ffffff;"></div>
<span class="t" id="l56" style="left:82.00px;top:711.75px;font-size:12.5px;line-height:12.5px;height:12.5px;color:#555351;transform:scaleX(0.9102);">Slajd 1 z 13</span>
<span class="t" id="l57" style="left:159.55px;top:711.75px;font-size:12.5px;line-height:12.5px;height:12.5px;color:#555351;transform:scaleX(0.9535);">Polski</span>
<span class="t" id="l58" style="left:944.05px;top:711.55px;font-size:12.5px;line-height:12.5px;height:12.5px;color:#555351;transform:scaleX(0.9461);">Pomóż ulepszyć pakiet Office</span>
<svg style="left:1114px;top:710px;" width="16" height="14" viewBox="0 0 16 14"><path d="M4.6 4.6 L7.8 1.6 L11 4.6 M1 7.2 H14.6 M1 10 H14.6 M1 12.8 H10" fill="none" stroke="#555351" stroke-width="1"/></svg>
<span class="t" id="l59" style="left:1131.77px;top:711.55px;font-size:12.5px;line-height:12.5px;height:12.5px;color:#555351;transform:scaleX(1.0289);">Notatki</span>
<div style="left:1177px;top:706px;width:36px;height:22px;background:#c8c6c4;"></div>
<svg style="left:1187px;top:710px;" width="16" height="14" viewBox="0 0 16 14"><rect x="1.6" y="1.6" width="12.8" height="10.8" fill="none" stroke="#323130" stroke-width="1"/><path d="M4.4 1.6 V12.4 M4.4 9.4 H14.4" fill="none" stroke="#323130" stroke-width="1"/><rect x="7.6" y="4.4" width="4" height="2" fill="none" stroke="#323130" stroke-width="0.9"/></svg>
<svg style="left:1224px;top:710px;" width="16" height="14" viewBox="0 0 16 14"><rect x="1.5" y="1.5" width="5.2" height="4" fill="none" stroke="#323130" stroke-width="1"/><rect x="1.5" y="8.5" width="5.2" height="4" fill="none" stroke="#323130" stroke-width="1"/><rect x="9.5" y="1.5" width="5.2" height="4" fill="none" stroke="#323130" stroke-width="1"/><rect x="9.5" y="8.5" width="5.2" height="4" fill="none" stroke="#323130" stroke-width="1"/></svg>
<svg style="left:1260px;top:709px;" width="16" height="16" viewBox="0 0 16 16"><path d="M1.4 1.6 H14.4 M2.8 1.8 V7.6 H13 V1.8 M7.9 7.8 V12.6 M5 12.8 H10.8" fill="none" stroke="#555351" stroke-width="1.1"/></svg>
<span class="t" id="l60" style="left:1296.00px;top:711.55px;font-size:12.5px;line-height:12.5px;height:12.5px;color:#555351;transform:scaleX(0.9396);">77%</span>
<svg style="left:1336px;top:709px;" width="16" height="16" viewBox="0 0 16 16"><rect x="4.6" y="4.6" width="6.4" height="6.8" fill="none" stroke="#555351" stroke-width="1"/><path d="M5.6 3 L7.8 1 L10 3 M5.6 13 L7.8 15 L10 13 M2.8 5.8 L0.8 8 L2.8 10.2 M12.8 5.8 L14.8 8 L12.8 10.2" fill="none" stroke="#555351" stroke-width="1"/></svg>
<div style="left:0px;top:728px;width:1366px;height:40px;background:#52403a;"></div>
<div style="left:395px;top:728px;width:577px;height:40px;background:linear-gradient(90deg,#7e7064 0%,#786a5e 15%,#726458 30%,#73665a 45%,#776a5f 58%,#877c74 61.5%,#877c74 66%,#786b60 69.5%,#73665a 85%,#6f6256 100%);"></div>
<div style="left:52px;top:729px;width:58px;height:38px;background:#72635b;box-sizing:border-box;border:1px solid #85776f;"></div>
<div style="left:114px;top:729px;width:58px;height:38px;background:#72635b;box-sizing:border-box;border:1px solid #85776f;"></div>
<div style="left:424px;top:729px;width:58px;height:38px;background:#8b7d72;box-sizing:border-box;border:1px solid #a09388;"></div>
<div style="left:486px;top:729px;width:58px;height:38px;background:#9d9187;box-sizing:border-box;border:1px solid #d8d2cc;"></div>
<svg style="left:12px;top:734px;" width="27" height="27" viewBox="0 0 27 27"><path d="M0 3.8 L11.4 2.2 V12.8 H0 Z M12.8 2 L26.6 0 V12.8 H12.8 Z M0 14.2 H11.4 V24.8 L0 23.2 Z M12.8 14.2 H26.6 V27 L12.8 25 Z" fill="#ffffff"/></svg>
<svg style="left:64px;top:731px" width="32" height="31" viewBox="0 0 32 31"><defs><linearGradient id="wg" x1="0" y1="0" x2="1" y2="1"><stop offset="0" stop-color="#2f8fe6"/><stop offset="1" stop-color="#12309a"/></linearGradient></defs><path d="M8 1.4 H28.6 V29.4 H1.6 V7.8 Q1.6 1.4 8 1.4 Z" fill="#ffffff" stroke="#1d4fa5" stroke-width="1.5"/><path d="M2.4 20 L27.8 10 V28.6 H2.4 Z" fill="#dbe8f8"/><path d="M17 19 L30.6 17 L28 28.4 L15 28.6 Z" fill="#ffffff" stroke="#b5c8e6" stroke-width="0.5"/><text x="4.6" y="22" font-family="Liberation Sans, sans-serif" font-weight="700" font-style="italic" font-size="22" fill="url(#wg)" textLength="22" lengthAdjust="spacingAndGlyphs">W</text><path d="M19 21 L30.6 17.4 L28.4 27 L18 28.6 Z" fill="#f4f8fd" opacity="0.9"/></svg>
<svg style="left:126px;top:733px;" width="34" height="31" viewBox="0 0 34 31"><path d="M1.4 4.4 Q1.4 2.6 3.2 2.6 H16.6 Q18 2.6 18 4 V8 H1.4 Z" fill="#efd98c"/><path d="M9.6 6.2 Q9.6 4.6 11.2 4.6 H24.6 Q26 4.6 26 6 V9 H9.6 Z" fill="#f3e09a"/><path d="M19 8.4 Q19 6.8 20.6 6.8 H31 Q32.6 6.8 32.6 8.4 V12 H19 Z" fill="#f3e09a"/><path d="M1.4 9 H18 L20 11 H32.6 V27.4 Q32.6 28.6 31.4 28.6 H2.6 Q1.4 28.6 1.4 27.4 Z" fill="#f6e7a8" stroke="#e3c867" stroke-width="0.6"/><rect x="4.4" y="3.4" width="3" height="2.2" fill="#1fb83a"/><rect x="7.6" y="3.4" width="6" height="2.2" fill="#ffffff"/><rect x="13" y="5.4" width="3" height="2.2" fill="#d8321f"/><rect x="16.2" y="5.4" width="6" height="2.2" fill="#ffffff"/><rect x="22" y="7.8" width="3" height="2.2" fill="#2a8ff0"/><rect x="25.2" y="7.8" width="5" height="2.2" fill="#ffffff"/><path d="M5.4 19.6 Q5.4 18 7 18 H27.6 Q29.2 18 29.2 19.6 V30 H24 V24.4 H10.6 V30 H5.4 Z" fill="#8fd6f0" stroke="#3fa2d2" stroke-width="0.9"/><path d="M6.4 19 H28.2 V21.4 H6.4 Z" fill="#c9eefa"/></svg>
<svg style="left:188px;top:731px;" width="33" height="33" viewBox="0 0 33 33"><path d="M5 3 Q8 0 11 3 L13 9 L6 12 Q3 7 5 3 Z" fill="#e8d5bf"/><path d="M1.4 15 Q1 9 7 8 L14 12 L24 27 Q19 32.4 11 30.4 Q2 27 1.4 15 Z" fill="#c2211d"/><path d="M4 13 Q3 20 8 26" stroke="#e8746a" stroke-width="1.4" fill="none"/><circle cx="18" cy="15.6" r="8.4" fill="#e0241d" stroke="#b9b4b0" stroke-width="1.5"/><ellipse cx="17" cy="11.6" rx="5" ry="2.8" fill="#f4857c"/><path d="M24.6 22.4 L31.4 29" stroke="#1a1a1a" stroke-width="3" stroke-linecap="round"/><path d="M24.8 22.2 L30.6 27.8" stroke="#e8e8e8" stroke-width="0.9" stroke-linecap="round"/></svg>
<svg style="left:251px;top:732px" width="32" height="32" viewBox="0 0 32 32"><defs><linearGradient id="eg1" x1="0" y1="0" x2="1" y2="0"><stop offset="0" stop-color="#1ba1e2"/><stop offset="0.55" stop-color="#2fc4c0"/><stop offset="1" stop-color="#5fd84a"/></linearGradient><linearGradient id="eg2" x1="0" y1="0" x2="0" y2="1"><stop offset="0" stop-color="#1d8fe0"/><stop offset="1" stop-color="#0f4fa8"/></linearGradient></defs><path d="M1 15 C2 5 9 0.6 16 0.6 C25 0.6 31.4 7 31.4 14.6 C31.4 20 27 22.6 23 22.6 C19.4 22.6 18.4 21 19.4 19.6 C21 17.4 20 12.4 14.4 11.4 C8 10.4 2.4 13 1 15 Z" fill="url(#eg1)"/><path d="M1 15 C2.4 11 8 9 13 10.4 C9 13 8.4 18 11 22 C14 27 21 28 27 24 C24 30 18 32 12.6 31 C5 29.4 0.4 23 1 15 Z" fill="url(#eg2)"/></svg>
<svg style="left:312px;top:732px;" width="34" height="32" viewBox="0 0 34 32"><path d="M2 20 C2 11 10 6 18 6 C24 6 28 9 28 13 C28 17 24 17 22 17 C19 17 18 20 20 22 C22 24 20 28 14 28 C7 28 2 25 2 20 Z" fill="#dfeaf4" stroke="#9fb4c8" stroke-width="0.8"/><circle cx="6.6" cy="20" r="2.2" fill="#d9342b"/><circle cx="10.6" cy="14" r="2.2" fill="#4fae3f"/><circle cx="17" cy="11" r="2.2" fill="#e9a72b"/><circle cx="15" cy="21.6" r="2" fill="#6b5a50"/><path d="M17 31 L27 9" stroke="#e8852b" stroke-width="2.2" stroke-linecap="round"/><path d="M26 10 L28 2 Q30 0 32 3 L29.6 11 Z" fill="#e9c08a"/></svg>
<svg style="left:376px;top:732px;" width="30" height="32" viewBox="0 0 30 32"><path d="M1 7.4 H28.6 V22.4 H16 L12.6 28.6 V22.4 H1 Z" fill="#ffffff" stroke="#d9d4cf" stroke-width="0.6"/><path d="M18 19 L28.6 1.6" stroke="#ef8a3c" stroke-width="2.4" stroke-linecap="round"/></svg>
<svg style="left:438px;top:733px;" width="30.4" height="30.4" viewBox="0 0 32 32"><circle cx="16" cy="16" r="15.4" fill="#fff"/><path d="M16 16 L2.66 8.3 A15.4 15.4 0 0 1 29.34 8.3 Z" fill="#db4437"/><path d="M16 16 L29.34 8.3 A15.4 15.4 0 0 1 16 31.4 Z" fill="#ffcd40"/><path d="M16 16 L16 31.4 A15.4 15.4 0 0 1 2.66 8.3 Z" fill="#0f9d58"/><path d="M16 9 H29.7 A15.4 15.4 0 0 0 2.66 8.3 L9.9 12.5 A7 7 0 0 1 16 9 Z" fill="#db4437"/><path d="M22.1 19.5 L15.2 31.4 A15.4 15.4 0 0 0 29.7 9 H16 A7 7 0 0 1 22.1 19.5 Z" fill="#ffcd40"/><path d="M9.9 19.5 L2.66 8.3 A15.4 15.4 0 0 0 15.2 31.4 L22.1 19.5 A7 7 0 0 1 9.9 19.5 Z" fill="#0f9d58"/><circle cx="16" cy="16" r="7" fill="#fff"/><circle cx="16" cy="16" r="5.6" fill="#4285f4"/></svg>
<svg style="left:498px;top:732px;" width="34" height="32" viewBox="0 0 34 32"><circle cx="27.6" cy="9" r="3.4" fill="#5059c9"/><path d="M23 13.6 H32 Q33.4 13.6 33.4 15 V22 Q33.4 26.6 28.4 26.6 H23 Z" fill="#5059c9"/><circle cx="18.6" cy="6.6" r="5" fill="#7b83eb"/><path d="M11 13.6 H25 Q26.4 13.6 26.4 15 V23 Q26.4 30.6 18.6 30.6 Q11 30.6 11 23 Z" fill="#7b83eb"/><rect x="0.6" y="9" width="17.6" height="17.6" rx="1.8" fill="#4b53bc"/><text x="5" y="23" font-family="Liberation Sans, sans-serif" font-weight="700" font-size="14" fill="#ffffff">T</text></svg>
<svg style="left:1210px;top:746px;" width="9" height="6" viewBox="0 0 9 6"><path d="M0.4 5.4 L4.5 0.6 L8.6 5.4 Z" fill="#ffffff"/></svg>
<svg style="left:1231px;top:741px;" width="17" height="17" viewBox="0 0 17 17"><path d="M2 1 V15.6" stroke="#fff" stroke-width="1.3"/><path d="M2.6 1.8 Q5.6 0.6 8 2 Q10.4 3.4 13 2.2 V9 Q10.4 10.2 8 8.8 Q5.6 7.4 2.6 8.6 Z" fill="#fff"/><circle cx="11.4" cy="11.4" r="4.6" fill="#e0241b"/><path d="M9.4 9.4 L13.4 13.4 M13.4 9.4 L9.4 13.4" stroke="#fff" stroke-width="1.4"/></svg>
<svg style="left:1255px;top:743px;" width="16" height="12" viewBox="0 0 16 12"><rect x="0.4" y="9" width="2.2" height="2" fill="#fff"/><rect x="3.4" y="7.4" width="2.2" height="3.6" fill="#fff"/><rect x="6.6" y="5.4" width="2.2" height="5.6" fill="#fff"/><rect x="9.8" y="3.2" width="2.2" height="7.8" fill="#fff"/><rect x="13" y="0.5999999999999996" width="2.2" height="10.4" fill="#fff"/></svg>
<span class="t" id="l61" style="left:1305.50px;top:735.20px;font-size:12.2px;line-height:12.2px;height:12.2px;color:#ffffff;transform:scaleX(0.8626);">17:46</span>
<span class="t" id="l62" style="left:1288.60px;top:752.10px;font-size:12.2px;line-height:12.2px;height:12.2px;color:#ffffff;transform:scaleX(0.9334);">2021-04-10</span>
</div></body></html>
